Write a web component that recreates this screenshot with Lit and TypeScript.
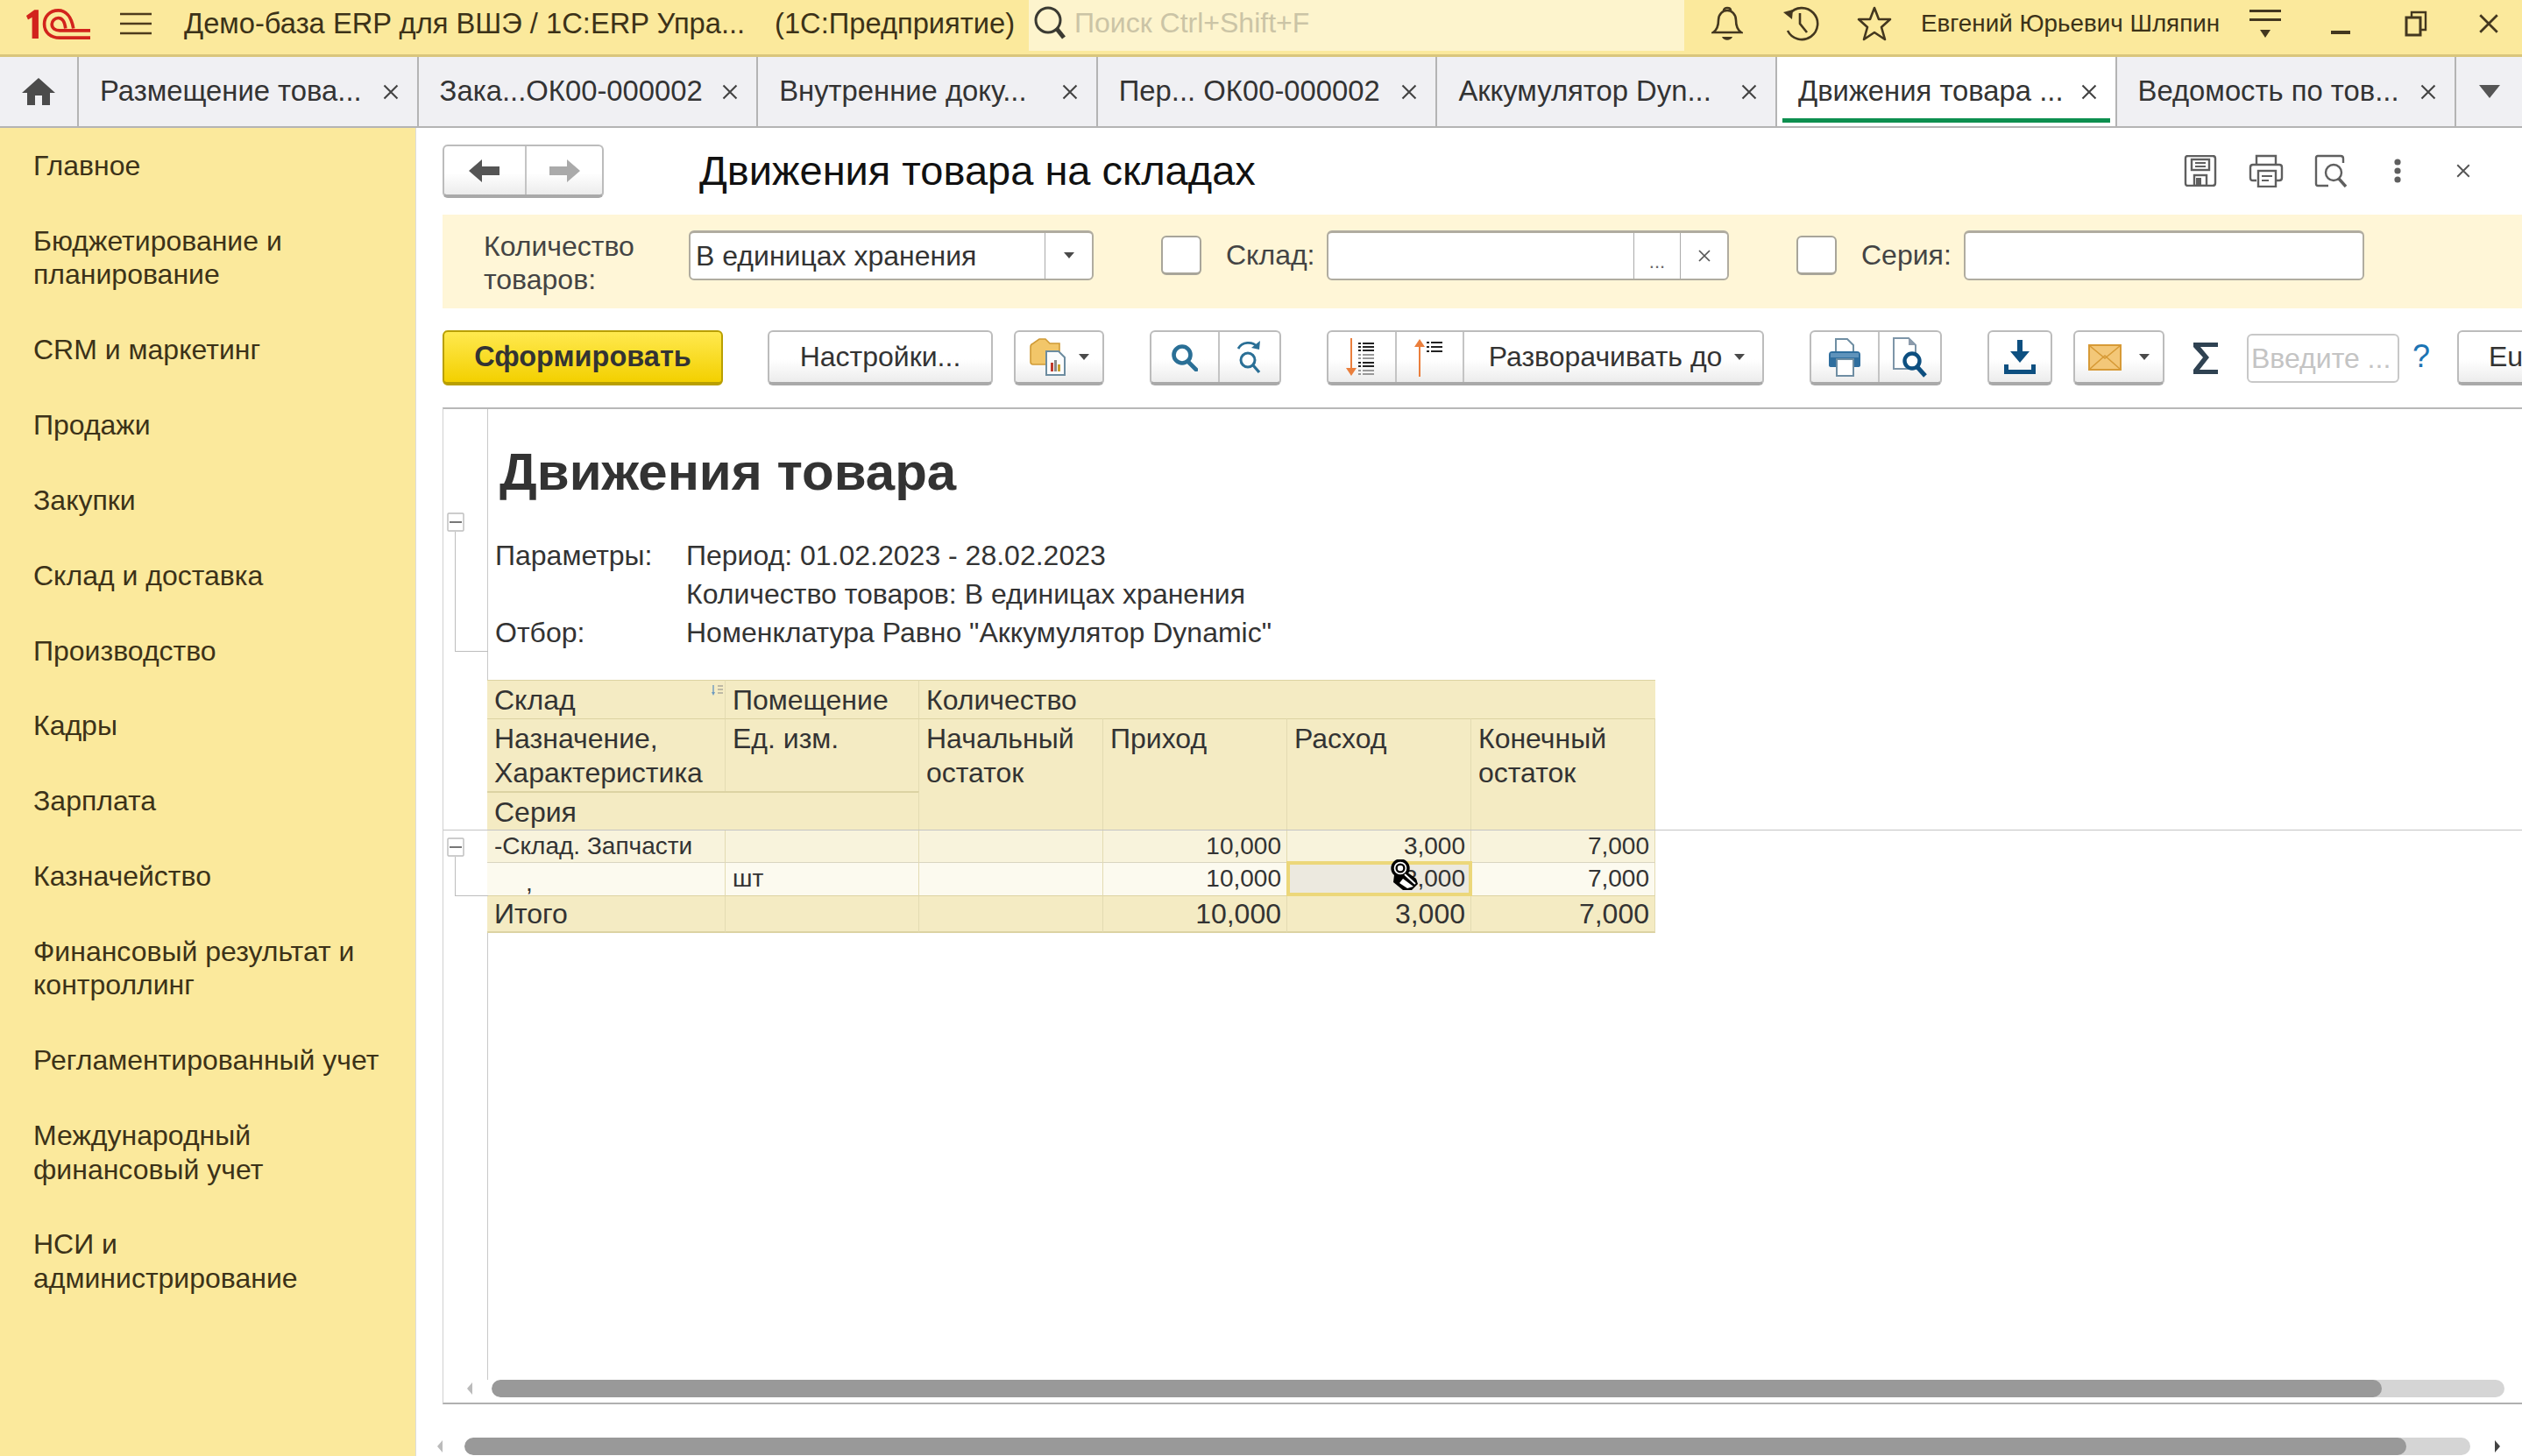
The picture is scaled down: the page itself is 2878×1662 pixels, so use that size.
import { LitElement, html, svg, css } from 'lit';
import { customElement } from 'lit/decorators.js';

const closeIcon = (size = 16, color = '#555') => html`
  <svg class="x" width=${size} height=${size} viewBox="0 0 16 16" fill="none" stroke=${color} stroke-width="1.7">
    <path d="M2 2 L14 14 M14 2 L2 14" />
  </svg>
`;

const caret = html`<svg class="caret" width="12" height="7" viewBox="0 0 12 7"><path d="M0 0H12L6 7Z" fill="#4a4a4a" /></svg>`;

const logo = html`
  <svg class="logo" width="73" height="37" viewBox="90 20 220 110" fill="none" stroke="#d2231c" stroke-width="11">
    <path d="M90 46 L118 26 H132 V125 H110 V52 L96 60 Z" fill="#d2231c" stroke="none" />
    <path d="M252 90 C245 48 225 28 200 28 C170 28 152 50 152 75 C152 105 175 122 205 122 H310" />
    <path d="M225 90 C222 65 212 54 200 54 C188 54 178 65 178 75 C178 90 190 97 205 97 H310" />
  </svg>
`;

const burger = html`
  <svg width="36" height="26" viewBox="0 0 36 26" stroke="#4d3b1c" stroke-width="2.5"><path d="M0 2H36M0 13H36M0 24H36" /></svg>
`;

const searchTop = html`
  <svg width="40" height="40" viewBox="0 0 40 40" fill="none" stroke="#3a3a32" stroke-width="3">
    <circle cx="18" cy="17" r="14" /><path d="M28 27 L36 37" stroke-width="5" />
  </svg>
`;

const bell = html`
  <svg width="36" height="40" viewBox="0 0 36 40" fill="none" stroke="#43371f" stroke-width="2.6">
    <path d="M2 30 C8 26 8 20 8 16 C8 9 13 5 18 5 C23 5 28 9 28 16 C28 20 28 26 34 30 Z" />
    <path d="M14 5 C14 1 22 1 22 5" />
    <path d="M12 35 H24 C22 40 14 40 12 35Z" fill="#43371f" stroke="none" />
  </svg>
`;

const history = html`
  <svg width="42" height="40" viewBox="0 0 42 40" fill="none" stroke="#43371f" stroke-width="2.6">
    <path d="M8 9 A18 18 0 1 1 6 28" />
    <path d="M1 7 L12 4 L11 15 Z" fill="#43371f" stroke="none" />
    <path d="M20 8 V20 L28 30" />
  </svg>
`;

const star = html`
  <svg width="40" height="40" viewBox="0 0 40 40" fill="none" stroke="#43371f" stroke-width="2.6" stroke-linejoin="round">
    <path d="M20 2 L25 15 L38 15 L28 24 L32 38 L20 30 L8 38 L12 24 L2 15 L15 15 Z" />
  </svg>
`;

const sectionMenu = html`
  <svg width="36" height="34" viewBox="0 0 36 34" fill="#43371f">
    <rect x="0" y="1" width="36" height="3" /><rect x="0" y="11" width="36" height="3" />
    <path d="M12 24H24L18 33Z" />
  </svg>
`;

const minimize = html`<svg width="22" height="26" viewBox="0 0 22 26"><rect x="0" y="21" width="22" height="4" fill="#43371f" /></svg>`;

const restore = html`
  <svg width="26" height="30" viewBox="0 0 26 30" fill="none" stroke="#43371f" stroke-width="3">
    <rect x="2" y="8" width="16" height="20" /><path d="M8 8 V2 H24 V22 H18" stroke-width="2.4" />
  </svg>
`;

const home = html`
  <svg width="38" height="32" viewBox="0 0 38 32" fill="#4b4b4b">
    <path d="M19 0 L38 17 H32 V31 H23 V20 H15 V31 H6 V17 H0 Z" />
  </svg>
`;

const arrowBack = (color: string) => html`
  <svg width="36" height="26" viewBox="0 0 36 26" fill=${color}><path d="M0 13 L15 0 V8 H35 V18 H15 V26 Z" /></svg>
`;

const arrowForward = (color: string) => html`
  <svg width="36" height="26" viewBox="0 0 36 26" fill=${color}><path d="M36 13 L21 0 V8 H1 V18 H21 V26 Z" /></svg>
`;

const saveIcon = html`
  <svg width="38" height="36" viewBox="0 0 38 36" fill="none" stroke="#5f5f5f" stroke-width="2.4">
    <path d="M2 4 Q2 1 5 1 H33 Q36 1 36 4 V32 Q36 35 33 35 H5 Q2 35 2 32 Z" />
    <rect x="9" y="5" width="20" height="12" /><path d="M13 9H25M13 13H25" stroke-width="2" />
    <rect x="12" y="23" width="14" height="12" /><rect x="14" y="26" width="6" height="9" fill="#5f5f5f" stroke="none" />
  </svg>
`;

const printOutline = html`
  <svg width="40" height="38" viewBox="0 0 40 38" fill="none" stroke="#5f5f5f" stroke-width="2.4">
    <path d="M9 12 V2 H31 V12" />
    <path d="M9 30 H5 Q2 30 2 27 V15 Q2 12 5 12 H35 Q38 12 38 15 V27 Q38 30 35 30 H31" />
    <rect x="11" y="19" width="20" height="18" />
    <path d="M15 25H27M15 30H23" stroke-width="2" />
  </svg>
`;

const previewOutline = html`
  <svg width="40" height="38" viewBox="0 0 40 38" fill="none" stroke="#5f5f5f" stroke-width="2.4">
    <path d="M16 36 H4 Q2 36 2 34 V4 Q2 2 4 2 H30 Q33 2 33 5 V10" />
    <circle cx="22" cy="21" r="9" /><path d="M28 28 L36 37" stroke-width="3.4" />
  </svg>
`;

const dots = html`
  <svg width="8" height="28" viewBox="0 0 8 28" fill="#5f5f5f"><circle cx="4" cy="4" r="3.6" /><circle cx="4" cy="14" r="3.6" /><circle cx="4" cy="24" r="3.6" /></svg>
`;

const reportFolder = html`
  <svg width="42" height="44" viewBox="0 0 42 44">
    <path d="M1 10 Q1 7 4 6 L11 1 H18 L23 6 H34 V30 H4 Q1 30 1 27 Z" fill="#f2c669" stroke="#d09b36" stroke-width="1.6" />
    <path d="M19 15 H33 L40 22 V42 H19 Z" fill="#fbfcfd" stroke="#6c8ca0" stroke-width="2" />
    <rect x="24" y="28" width="3" height="10" fill="#c0392b" /><rect x="28" y="25" width="3" height="13" fill="#8a8a8a" />
    <rect x="32" y="30" width="3" height="8" fill="#c8a030" />
  </svg>
`;

const blueSearch = html`
  <svg width="30" height="32" viewBox="0 0 30 32" fill="none" stroke="#2a6f96" stroke-width="4.6">
    <circle cx="12" cy="13" r="9.5" /><path d="M19 21 L28 30" stroke-linecap="round" />
  </svg>
`;

const repeatSearch = html`
  <svg width="30" height="40" viewBox="0 0 30 40" fill="none" stroke="#2a6f96" stroke-width="2.8">
    <path d="M2 10 C6 2 18 1 24 8" /><path d="M27 1 L26 11 L17 9 Z" fill="#2a6f96" stroke="none" />
    <circle cx="13" cy="23" r="8" stroke-width="3" /><path d="M19 29 L26 37" stroke-width="3.4" />
  </svg>
`;

const listLines = (rows: number[], color: string) => rows.map((y) => svg`
  <rect x="14" y=${y} width="3" height="2" fill=${color} /><rect x="19" y=${y} width="13" height="2" fill=${color} />
`);

const sortDown = html`
  <svg width="36" height="44" viewBox="0 0 36 44">
    <path d="M6 0 V36" stroke="#ea7f3d" stroke-width="2" /><path d="M0 34 H12 L6 43 Z" fill="#ea7f3d" />
    ${listLines([5, 9, 13], '#222')}${listLines([18, 22], '#999')}${listLines([27, 31], '#222')}${listLines([36, 40], '#999')}
  </svg>
`;

const sortUp = html`
  <svg width="36" height="44" viewBox="0 0 36 44">
    <path d="M6 8 V44" stroke="#ea7f3d" stroke-width="2" /><path d="M0 10 H12 L6 1 Z" fill="#ea7f3d" />
    ${listLines([4, 9, 14], '#222')}
  </svg>
`;

const printBlue = html`
  <svg width="38" height="44" viewBox="0 0 38 44">
    <path d="M9 16 V1 H22 L29 8 V16 Z" fill="#fff" stroke="#6f8ea3" stroke-width="2" />
    <path d="M1 19 Q1 15 5 15 H33 Q37 15 37 19 V31 Q37 33 34 33 H4 Q1 33 1 31 Z" fill="#2f6e9e" />
    <rect x="3" y="17" width="32" height="5" fill="#5f93bb" />
    <rect x="10" y="24" width="19" height="19" fill="#fff" stroke="#6f8ea3" stroke-width="2" />
  </svg>
`;

const previewBlue = html`
  <svg width="40" height="46" viewBox="0 0 40 46" fill="none">
    <path d="M1 1 H18 L26 9 V36 H1 Z" fill="#fff" stroke="#7d95a8" stroke-width="2" />
    <path d="M18 1 L26 9 H18 Z" fill="#8d9bab" />
    <circle cx="22" cy="27" r="8.5" fill="#fff" stroke="#0d4f80" stroke-width="4.4" />
    <path d="M28 34 L37 44" stroke="#0d4f80" stroke-width="5" />
  </svg>
`;

const download = html`
  <svg width="38" height="40" viewBox="0 0 38 40" fill="#0d4f80">
    <rect x="16" y="0" width="6" height="14" /><path d="M8 13 H30 L19 26 Z" />
    <path d="M1 28 H6 V34 H32 V28 H37 V39 H1 Z" />
  </svg>
`;

const mail = html`
  <svg width="38" height="30" viewBox="0 0 38 30">
    <rect x="1" y="1" width="36" height="28" fill="#f3c778" stroke="#d79a36" stroke-width="2" />
    <path d="M2 2 L19 16 L36 2 M2 28 L19 13 L36 28" fill="none" stroke="#d79a36" stroke-width="1.6" />
  </svg>
`;

const sigma = html`
  <svg width="30" height="36" viewBox="0 0 30 36" fill="#2f4252">
    <path d="M1 0 H29 V5 H9 L19 17 L8 31 H29 V36 H1 V31 L12 17 L1 5 Z" />
  </svg>
`;

const collapse = html`
  <svg width="20" height="22" viewBox="0 0 20 22" fill="#fff" stroke="#bdbdbd" stroke-width="1.4">
    <rect x="1" y="1" width="18" height="20" rx="1" /><path d="M3 11H17" stroke="#555" stroke-width="1.6" />
  </svg>
`;

const tinySort = html`
  <svg width="14" height="12" viewBox="0 0 14 12">
    <path d="M2 0 V10" stroke="#6d9ac0" stroke-width="1.4" /><path d="M0 8 H4 L2 12 Z" fill="#6d9ac0" />
    <path d="M7 1H13M7 5H13M7 9H13" stroke="#888" stroke-width="1.2" />
  </svg>
`;

// mouse pointer: magnifier over a hand, blocky black and white
const pointer = html`
  <svg width="32" height="36" viewBox="0 0 32 36" fill="none">
    <path d="M4 18 L3 26 L14 35 H24 L31 28 L29 22 L18 14 Z" fill="#000" />
    <path d="M14 22 L26 31 L19 33 L10 27 Z" fill="#fff" />
    <circle cx="11" cy="10" r="9" fill="#fff" stroke="#000" stroke-width="3.4" />
    <circle cx="11" cy="10" r="4.4" stroke="#000" stroke-width="2.4" />
    <path d="M16 17 L28 28" stroke="#fff" stroke-width="2" />
  </svg>
`;

const MENU = [
  'Главное',
  'Бюджетирование и\nпланирование',
  'CRM и маркетинг',
  'Продажи',
  'Закупки',
  'Склад и доставка',
  'Производство',
  'Кадры',
  'Зарплата',
  'Казначейство',
  'Финансовый результат и\nконтроллинг',
  'Регламентированный учет',
  'Международный\nфинансовый учет',
  'НСИ и\nадминистрирование',
];

const TABS = [
  'Размещение това...',
  'Зака...ОК00-000002',
  'Внутренние доку...',
  'Пер... ОК00-000002',
  'Аккумулятор Dyn...',
  'Движения товара ...',
  'Ведомость по тов...',
];
const ACTIVE_TAB = 5;

@customElement('app-root')
export class AppRoot extends LitElement {
  static styles = css`
    :host {
      display: block;
      width: 2878px;
      height: 1662px;
      overflow: hidden;
      background: #fff;
      font-family: 'Liberation Sans', Arial, sans-serif;
      font-size: 32px;
      line-height: 38.5px;
      color: #333;
    }

    /* top bar */
    .top {
      display: flex;
      align-items: center;
      box-sizing: border-box;
      height: 65px;
      padding: 0 0 8px 30px;
      background: #fbe99c;
      border-bottom: 3px solid #d9c67c;
      color: #3c3218;
      font-size: 32.7px;
      white-space: nowrap;
      overflow: hidden;
    }
    .top > * { flex: none; }
    .burger { display: flex; margin-left: 34px; }
    .app-title { width: 674px; margin-left: 37px; }
    .app-kind { width: 290px; }
    .search {
      display: flex;
      align-items: center;
      align-self: flex-start;
      box-sizing: border-box;
      width: 748px;
      height: 58px;
      padding: 0 0 6px 4px;
      background: #fdf4cd;
      color: #cbc4a6;
      font-size: 32px;
    }
    .search span { margin-left: 8px; }
    .slot { display: flex; justify-content: center; width: 84px; }
    .slot.first { margin-left: 7px; }
    .user { width: 350px; margin-left: 11px; font-size: 27.8px; }
    .win { display: flex; justify-content: center; width: 86px; }
    .win.last { width: 80px; }

    /* tabs */
    .tabs {
      display: flex;
      box-sizing: border-box;
      height: 81px;
      background: #f0f0f3;
      border-bottom: 2px solid #b4b4b4;
      font-size: 32.8px;
      white-space: nowrap;
    }
    .home {
      display: flex;
      align-items: center;
      justify-content: center;
      box-sizing: border-box;
      width: 90px;
      border-right: 2px solid #b4b4b4;
    }
    .tab {
      position: relative;
      display: flex;
      align-items: center;
      justify-content: space-between;
      box-sizing: border-box;
      width: 387.6px;
      padding: 0 20px 0 24px;
      border-right: 2px solid #b4b4b4;
    }
    .tab.active { background: #fff; }
    .tab.active::after {
      content: '';
      position: absolute;
      left: 6px;
      right: 6px;
      bottom: 4px;
      height: 5px;
      background: #0d8f4f;
    }
    .more {
      display: flex;
      align-items: center;
      justify-content: center;
      flex: 1;
    }

    .body { display: flex; height: 1516px; }

    /* section panel */
    .side {
      flex: none;
      width: 474px;
      background: #fbe99c;
      color: #3c3218;
    }
    .side-item {
      padding: 24px 0 23.35px 38px;
      white-space: pre-line;
    }

    .main {
      flex: 1;
      min-width: 0;
      padding-left: 30px;
      border-left: 1px solid #dcdcdc;
      box-sizing: border-box;
    }

    /* form head */
    .head {
      display: flex;
      align-items: flex-start;
      box-sizing: border-box;
      height: 99px;
      padding-top: 19px;
    }
    h1 {
      margin: 0 0 0 109px;
      font-size: 47px;
      line-height: 60px;
      font-weight: normal;
      color: #111;
      white-space: nowrap;
    }
    .head-tools {
      display: flex;
      align-items: center;
      margin-left: auto;
      height: 60px;
      padding-right: 30px;
    }
    .head-tools > * { flex: none; }
    .head-tool {
      display: flex;
      justify-content: center;
      width: 75px;
    }

    /* buttons */
    .btn {
      display: flex;
      box-sizing: border-box;
      height: 63px;
      flex: none;
      background: linear-gradient(#fff 55%, #ececec);
      border: 2px solid #bcbcbc;
      border-bottom: 4px solid #a9a9a9;
      border-radius: 6px;
      white-space: nowrap;
      color: #333;
    }
    .seg {
      display: flex;
      align-items: center;
      justify-content: center;
      box-sizing: border-box;
    }
    .seg + .seg { border-left: 2px solid #c4c4c4; }
    .nav { width: 184px; height: 61px; }
    .nav .seg:first-child { width: 93px; }
    .nav .seg:last-child { width: 89px; }

    /* filter band */
    .band {
      display: flex;
      align-items: center;
      box-sizing: border-box;
      height: 107px;
      padding: 0 0 15px 47px;
      background: #fff6d7;
      color: #444;
      white-space: nowrap;
    }
    .band-label { width: 234px; margin-top: 18px; }
    .field {
      display: flex;
      box-sizing: border-box;
      flex: none;
      height: 57px;
      background: #fff;
      border: 2px solid #b0aca0;
      border-top-width: 3px;
      border-radius: 6px;
      color: #333;
    }
    .field-text { flex: 1; padding: 0 0 0 6px; line-height: 52px; }
    .field-btn {
      display: flex;
      align-items: center;
      justify-content: center;
      border-left: 1px solid #aaa;
    }
    .select { width: 462px; }
    .select .field-btn { width: 53px; }
    .ref { width: 459px; }
    .ref .field-btn { width: 53px; }
    .ref .dots {
      align-items: flex-end;
      box-sizing: border-box;
      padding-bottom: 8px;
      color: #666;
      font-size: 22px;
      line-height: 22px;
    }
    .plain { width: 457px; }
    .check {
      flex: none;
      box-sizing: border-box;
      width: 46px;
      height: 45px;
      margin: 0 28px 0 77px;
      background: #fff;
      border: 2px solid #a8a59a;
      border-bottom-width: 3px;
      border-radius: 6px;
    }
    .sklad { width: 115px; }
    .seria { width: 117px; }

    /* command bar */
    .bar {
      display: flex;
      gap: 52px;
      box-sizing: border-box;
      height: 113px;
      padding-top: 25px;
      white-space: nowrap;
    }
    .group { display: flex; align-items: flex-start; gap: 24px; flex: none; }
    .run {
      width: 320px;
      margin-right: -1px;
      justify-content: center;
      align-items: center;
      background: linear-gradient(#ffe94f, #f3d000);
      border-color: #b99f00;
      font-size: 32.5px;
      font-weight: bold;
    }
    .settings { width: 257px; }
    .settings .seg { width: 100%; }
    .folder { width: 103px; }
    .folder .seg { width: 100%; gap: 14px; }
    .pair-search .seg:first-child { width: 76px; }
    .pair-search .seg:last-child { width: 70px; }
    .sort .seg:nth-child(1) { width: 76px; }
    .sort .seg:nth-child(2) { width: 77px; }
    .sort .seg:nth-child(3) { width: 342px; gap: 14px; padding-left: 8px; }
    .print .seg:first-child { width: 76px; }
    .print .seg:last-child { width: 71px; }
    .dl { width: 74px; }
    .dl .seg { width: 100%; }
    .mail { width: 104px; }
    .mail .seg { width: 100%; gap: 20px; }
    .sigma { display: flex; justify-content: center; flex: none; width: 46px; height: 63px; align-items: center; }
    .find-wrap { display: flex; align-items: flex-start; }
    .find {
      box-sizing: border-box;
      width: 174px;
      height: 56px;
      margin-top: 4px;
      padding-left: 3px;
      border: 2px solid #c8c8c8;
      border-radius: 6px;
      color: #c4c4c4;
      line-height: 52px;
    }
    .help {
      width: 34px;
      margin-left: 8px;
      height: 63px;
      font-size: 36px;
      line-height: 60px;
      text-align: center;
      color: #1c74b4;
    }
    .eu { width: 90px; justify-content: flex-start; overflow: hidden; }
    .eu .seg { padding-left: 34px; }

    /* spreadsheet */
    .report {
      position: relative;
      display: flex;
      flex-direction: column;
      box-sizing: border-box;
      height: 1138px;
      border-top: 2px solid #b8b8b8;
      border-bottom: 2px solid #b0b0b0;
      border-left: 1px solid #d0d0d0;
    }
    .sheet {
      flex: 1;
      min-height: 0;
      margin-left: 50px;
      border-left: 1px solid #c8c8c8;
    }
    .rep-title {
      margin: 38px 0 0 13px;
      font-size: 60px;
      line-height: 68px;
      font-weight: bold;
      color: #333;
    }
    .params {
      display: grid;
      grid-template-columns: 218px auto;
      grid-auto-rows: 44px;
      margin: 39px 0 0 8px;
      line-height: 44px;
    }
    .table {
      display: grid;
      grid-template-columns: 272px 221px 210px 210px 210px 210px;
      grid-template-rows: 44px 83px 44px 37px 38px 43px;
      width: 1333px;
      margin: 32px 0 0 -1px;
    }
    .cell {
      position: relative;
      box-sizing: border-box;
      padding: 3px 8px 0;
      background: #f4ebc3;
      border-top: 1px solid #dcd3a3;
      border-right: 1px solid #e3dbb2;
      min-width: 0;
    }
    .span-4 { grid-column: span 4; border-right: 0; }
    .span-2 { grid-column: span 2; border-top: 2px solid #dcd3a3; }
    .rows-2 { grid-row: span 2; }
    .tiny {
      position: absolute;
      display: flex;
      top: 5px;
      right: 1px;
    }
    .num { text-align: right; padding-right: 6px; }
    .group-row {
      background: #f8f3dc;
      font-size: 28px;
      line-height: 34px;
      padding-top: 1px;
      border-top-color: #e2dcc0;
    }
    .detail {
      background: #fcfaef;
      font-size: 28px;
      line-height: 34px;
      padding-top: 1px;
      border-top-color: #d9d5c0;
    }
    .detail.comma { padding-left: 44px; padding-top: 6px; }
    .detail.selected {
      background: #ece9df;
      outline: 4px solid #ecd77a;
      outline-offset: -3px;
      z-index: 1;
    }
    .total { padding-top: 1px; border-bottom: 2px solid #dcd3a3; }

    /* these sit over the sheet: outline gutter and the row border */
    .rule {
      position: absolute;
      left: 0;
      right: 0;
      top: 480px;
      height: 1px;
      background: #c4c4c4;
    }
    .box-a { position: absolute; left: 4px; top: 118px; display: flex; }
    .box-b { position: absolute; left: 4px; top: 489px; display: flex; }
    .bracket {
      position: absolute;
      left: 13px;
      width: 37px;
      border-left: 1px solid #bdbdbd;
      border-bottom: 1px solid #bdbdbd;
    }
    .bracket-a { top: 140px; height: 136px; }
    .bracket-b { top: 511px; height: 44px; }
    .pointer { position: absolute; left: 118px; top: -4px; z-index: 2; display: flex; }

    /* scrollbars */
    .hscroll {
      display: flex;
      align-items: center;
      flex: none;
      height: 20px;
    }
    .inner { margin: 0 20px 6px 27px; }
    .outer { margin: 38px 25px 0 -6px; }
    .track {
      flex: 1;
      height: 20px;
      margin-left: 22px;
      background: #d5d5d5;
      border-radius: 10px;
      overflow: hidden;
    }
    .thumb { height: 100%; background: #999; border-radius: 10px; }
    .inner .thumb { width: 2157px; }
    .outer .thumb { width: 2216px; }
    .outer .track { margin-left: 25px; margin-right: 28px; }
  `;

  renderTop() {
    return html`
      <div class="top">
        ${logo}
        <div class="burger">${burger}</div>
        <div class="app-title">Демо-база ERP для ВШЭ / 1С:ERP Упра...</div>
        <div class="app-kind">(1С:Предприятие)</div>
        <div class="search">${searchTop}<span>Поиск Ctrl+Shift+F</span></div>
        <div class="slot first">${bell}</div>
        <div class="slot">${history}</div>
        <div class="slot">${star}</div>
        <div class="user">Евгений Юрьевич Шляпин</div>
        <div class="win">${sectionMenu}</div>
        <div class="win">${minimize}</div>
        <div class="win">${restore}</div>
        <div class="win last">${closeIcon(26, '#43371f')}</div>
      </div>
    `;
  }

  renderTabs() {
    return html`
      <div class="tabs">
        <div class="home">${home}</div>
        ${TABS.map((t, i) => html`
          <div class="tab ${i === ACTIVE_TAB ? 'active' : ''}">
            <span>${t}</span>${closeIcon(20, '#444')}
          </div>
        `)}
        <div class="more">
          <svg width="24" height="15" viewBox="0 0 24 15"><path d="M0 0H24L12 15Z" fill="#555" /></svg>
        </div>
      </div>
    `;
  }

  renderBand() {
    return html`
      <div class="band">
        <div class="band-label">Количество<br />товаров:</div>
        <div class="field select">
          <div class="field-text">В единицах хранения</div>
          <div class="field-btn">${caret}</div>
        </div>
        <div class="check"></div>
        <div class="sklad">Склад:</div>
        <div class="field ref">
          <div class="field-text"></div>
          <div class="field-btn dots">...</div>
          <div class="field-btn">${closeIcon(16, '#555')}</div>
        </div>
        <div class="check"></div>
        <div class="seria">Серия:</div>
        <div class="field plain"><div class="field-text"></div></div>
      </div>
    `;
  }

  renderBar() {
    return html`
      <div class="bar">
        <div class="btn run">Сформировать</div>
        <div class="group">
          <div class="btn settings"><div class="seg">Настройки...</div></div>
          <div class="btn folder"><div class="seg">${reportFolder}${caret}</div></div>
        </div>
        <div class="btn pair-search">
          <div class="seg">${blueSearch}</div>
          <div class="seg">${repeatSearch}</div>
        </div>
        <div class="btn sort">
          <div class="seg">${sortDown}</div>
          <div class="seg">${sortUp}</div>
          <div class="seg">Разворачивать до ${caret}</div>
        </div>
        <div class="btn print">
          <div class="seg">${printBlue}</div>
          <div class="seg">${previewBlue}</div>
        </div>
        <div class="group">
          <div class="btn dl"><div class="seg">${download}</div></div>
          <div class="btn mail"><div class="seg">${mail}${caret}</div></div>
          <div class="sigma">${sigma}</div>
          <div class="find-wrap">
            <div class="find">Введите ...</div>
            <div class="help">?</div>
          </div>
          <div class="btn eu"><div class="seg">Eu</div></div>
        </div>
      </div>
    `;
  }

  renderTable() {
    return html`
      <div class="table">
        <div class="cell">Склад<span class="tiny">${tinySort}</span></div>
        <div class="cell">Помещение</div>
        <div class="cell span-4">Количество</div>

        <div class="cell">Назначение,<br />Характеристика</div>
        <div class="cell">Ед. изм.</div>
        <div class="cell rows-2">Начальный<br />остаток</div>
        <div class="cell rows-2">Приход</div>
        <div class="cell rows-2">Расход</div>
        <div class="cell rows-2">Конечный<br />остаток</div>
        <div class="cell span-2">Серия</div>

        <div class="cell group-row">-Склад. Запчасти</div>
        <div class="cell group-row"></div>
        <div class="cell group-row"></div>
        <div class="cell group-row num">10,000</div>
        <div class="cell group-row num">3,000</div>
        <div class="cell group-row num">7,000</div>

        <div class="cell detail comma">,</div>
        <div class="cell detail">шт</div>
        <div class="cell detail"></div>
        <div class="cell detail num">10,000</div>
        <div class="cell detail num selected">3,000<span class="pointer">${pointer}</span></div>
        <div class="cell detail num">7,000</div>

        <div class="cell total">Итого</div>
        <div class="cell total"></div>
        <div class="cell total"></div>
        <div class="cell total num">10,000</div>
        <div class="cell total num">3,000</div>
        <div class="cell total num">7,000</div>
      </div>
    `;
  }

  render() {
    return html`
      ${this.renderTop()}
      ${this.renderTabs()}
      <div class="body">
        <div class="side">
          ${MENU.map((m) => html`<div class="side-item">${m}</div>`)}
        </div>
        <div class="main">
          <div class="head">
            <div class="btn nav">
              <div class="seg">${arrowBack('#555')}</div>
              <div class="seg">${arrowForward('#aaa')}</div>
            </div>
            <h1>Движения товара на складах</h1>
            <div class="head-tools">
              <div class="head-tool">${saveIcon}</div>
              <div class="head-tool">${printOutline}</div>
              <div class="head-tool">${previewOutline}</div>
              <div class="head-tool">${dots}</div>
              <div class="head-tool">${closeIcon(18, '#555')}</div>
            </div>
          </div>
          ${this.renderBand()}
          ${this.renderBar()}
          <div class="report">
            <div class="sheet">
              <div class="rep-title">Движения товара</div>
              <div class="params">
                <div>Параметры:</div><div>Период: 01.02.2023 - 28.02.2023</div>
                <div></div><div>Количество товаров: В единицах хранения</div>
                <div>Отбор:</div><div>Номенклатура Равно "Аккумулятор Dynamic"</div>
              </div>
              ${this.renderTable()}
            </div>
            <div class="rule"></div>
            <div class="box-a">${collapse}</div>
            <div class="bracket bracket-a"></div>
            <div class="box-b">${collapse}</div>
            <div class="bracket bracket-b"></div>
            <div class="hscroll inner">
              <svg width="6" height="14" viewBox="0 0 6 14"><path d="M6 0V14L0 7Z" fill="#bbb" /></svg>
              <div class="track"><div class="thumb"></div></div>
            </div>
          </div>
          <div class="hscroll outer">
            <svg width="6" height="14" viewBox="0 0 6 14"><path d="M6 0V14L0 7Z" fill="#bbb" /></svg>
            <div class="track"><div class="thumb"></div></div>
            <svg width="6" height="14" viewBox="0 0 6 14"><path d="M0 0V14L6 7Z" fill="#444" /></svg>
          </div>
        </div>
      </div>
    `;
  }
}
